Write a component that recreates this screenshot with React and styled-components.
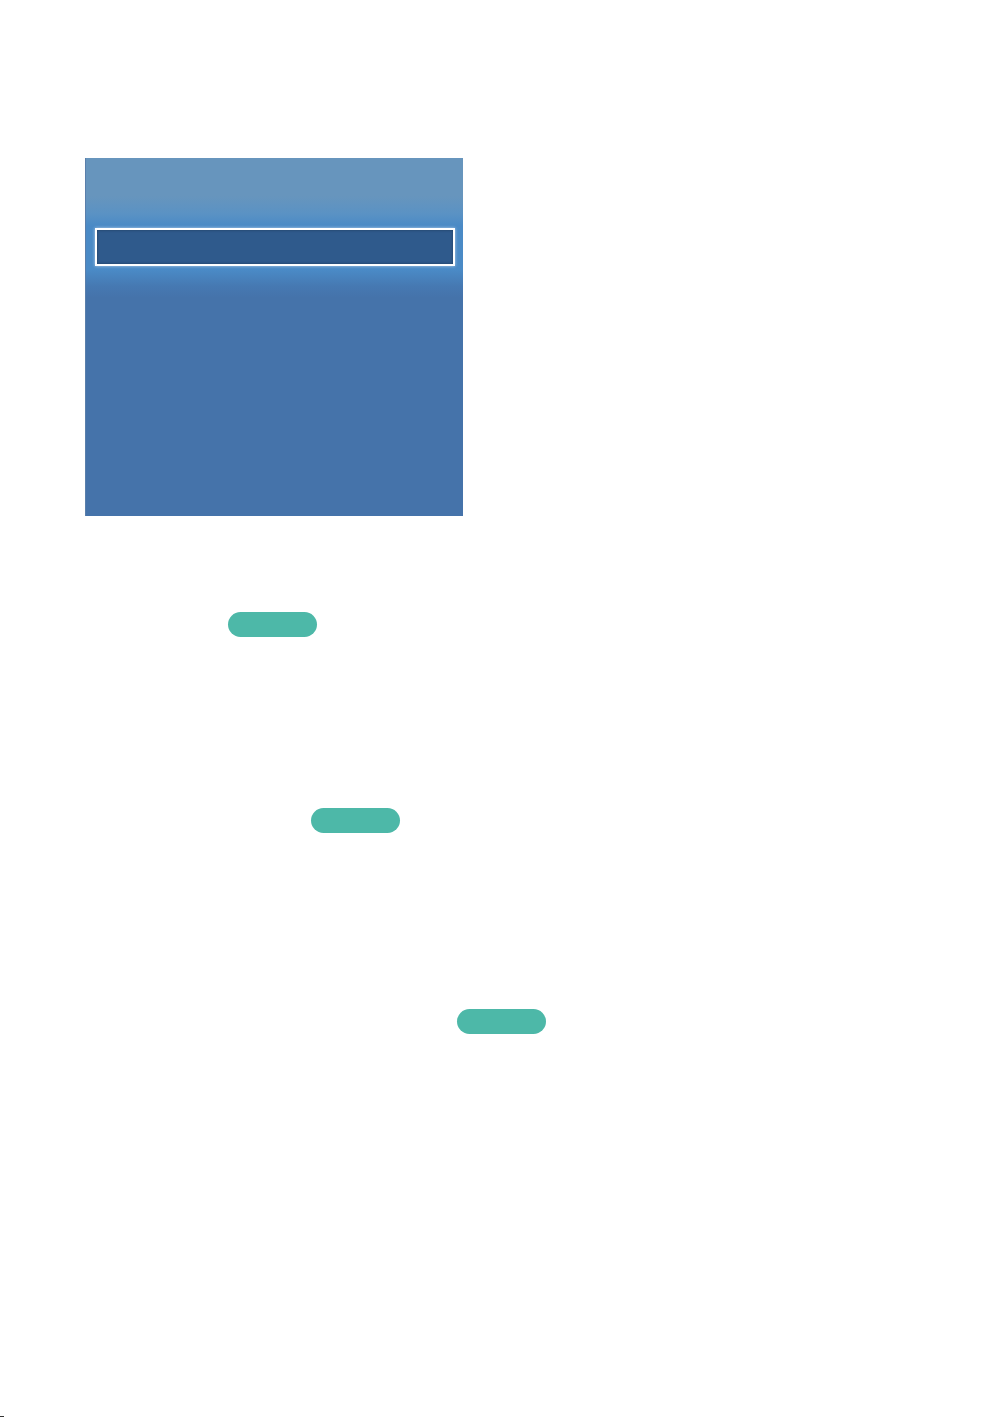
import React from "react";
import styled, { createGlobalStyle } from "styled-components";

const GlobalStyle = createGlobalStyle`
  html, body {
    margin: 0;
    padding: 0;
    background: #ffffff;
    font-family: "Liberation Sans", Arial, sans-serif;
  }
`;

const Page = styled.div`
  width: 999px;
  height: 1418px;
  position: relative;
  padding-top: 158px;
  box-sizing: border-box;
  overflow: hidden;
`;

const Screen = styled.div`
  margin-left: 85px;
  width: 378px;
  height: 358px;
  box-sizing: border-box;
  padding: 70px 8px 0 9px;
  border-left: 1px solid #5a7fab;
  background: linear-gradient(
    to bottom,
    #6795bd 0px,
    #6795bd 38px,
    #5a92c4 56px,
    #4a8ac6 68px,
    #4a8ac6 112px,
    #4679b2 128px,
    #4573aa 140px,
    #4573aa 100%
  );
`;

const Selected = styled.div`
  height: 38px;
  box-sizing: border-box;
  border: 2px solid #ffffff;
  background: #2f5a8c;
  box-shadow: 0 0 3px rgba(255, 255, 255, 0.6), inset 0 0 3px rgba(0, 0, 0, 0.35);
`;

const Line = styled.div`
  height: 25px;
  padding-left: ${(p) => p.indent}px;
  margin-top: ${(p) => p.gap}px;
`;

const Pill = styled.span`
  display: inline-block;
  width: 89px;
  height: 25px;
  border-radius: 13px;
  background: #4db8a8;
`;

const Mark = styled.div`
  position: absolute;
  left: 0;
  bottom: 1px;
  width: 4px;
  height: 1px;
  background: #333;
`;

export default function App() {
  return (
    <Page>
      <GlobalStyle />
      <Screen>
        <Selected />
      </Screen>
      <Line indent={228} gap={96}>
        <Pill />
      </Line>
      <Line indent={311} gap={171}>
        <Pill />
      </Line>
      <Line indent={457} gap={176}>
        <Pill />
      </Line>
      <Mark />
    </Page>
  );
}
